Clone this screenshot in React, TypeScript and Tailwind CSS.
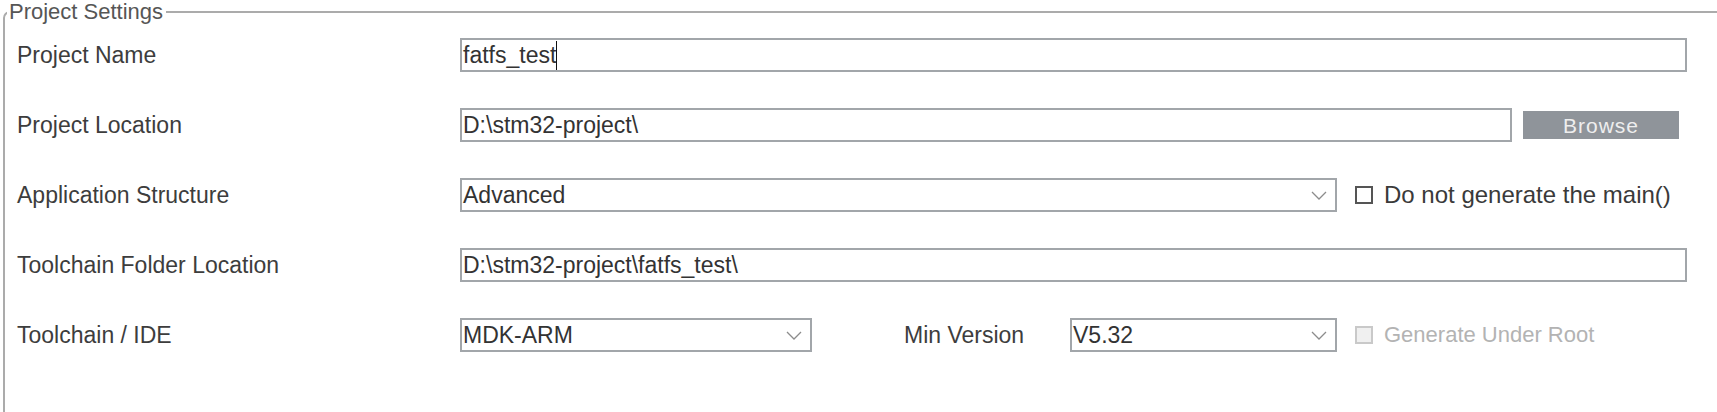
import React from "react";

const Chevron: React.FC = () => (
  <svg width="16" height="9" viewBox="0 0 16 9" fill="none" className="shrink-0">
    <path d="M1 1L8 8L15 1" stroke="#8c8c8c" strokeWidth="1.3" />
  </svg>
);

const TextBox: React.FC<{ value: string; width: string; caret?: boolean }> = ({ value, width, caret }) => (
  <div className={`${width} h-[34px] shrink-0 border-2 border-[#a2a6aa] bg-white flex items-center pl-[1px] pt-[1px] text-[#333333]`}>
    <span className="whitespace-pre">{value}</span>
    {caret && <span className="w-[1px] h-[29px] bg-[#111111]" />}
  </div>
);

const Select: React.FC<{ value: string; width: string }> = ({ value, width }) => (
  <div className={`${width} h-[34px] shrink-0 border-2 border-[#a2a6aa] bg-white flex items-center justify-between pl-[1px] pr-[8px] text-[#333333]`}>
    <span className="pt-[1px]">{value}</span>
    <Chevron />
  </div>
);

const Check: React.FC<{ label: string; disabled?: boolean }> = ({ label, disabled }) => (
  <div className="flex items-center gap-[11px] ml-[18px]">
    <span
      className={
        disabled
          ? "w-[18px] h-[18px] border-2 border-[#c9c9c9] bg-[#f0f0f0]"
          : "w-[18px] h-[18px] border-2 border-[#555555] bg-white"
      }
    />
    <span className={disabled ? "text-[#b3b3b3] text-[22px]" : "text-[#3a3a3a] text-[24px]"}>{label}</span>
  </div>
);

const Label: React.FC<{ children: React.ReactNode }> = ({ children }) => (
  <div className="w-[453px] shrink-0 pl-[10px] pt-[1px] text-[#3d3d3d]">{children}</div>
);

export default function App() {
  return (
    <div className="w-[1717px] h-[412px] overflow-hidden bg-white font-['Liberation_Sans',Arial,sans-serif] text-[23px] leading-none">
      <fieldset className="ml-[3px] w-[1740px] h-[450px] border-2 border-[#ababab] rounded-tl-[7px] pl-[2px]">
        <legend className="pl-[2px] pr-[3px] text-[22px] leading-[23px] text-[#565656]">Project Settings</legend>

        <div className="mt-[15px] flex flex-col gap-[36px]">
          <div className="flex items-center h-[34px]">
            <Label>Project Name</Label>
            <TextBox value="fatfs_test" width="w-[1227px]" caret />
          </div>

          <div className="flex items-center h-[34px]">
            <Label>Project Location</Label>
            <TextBox value="D:\stm32-project\" width="w-[1052px]" />
            <button className="ml-[11px] w-[156px] h-[28px] bg-[#8f949a] text-[#eeeeee] text-[21px] tracking-[1px]">
              Browse
            </button>
          </div>

          <div className="flex items-center h-[34px]">
            <Label>Application Structure</Label>
            <Select value="Advanced" width="w-[877px]" />
            <Check label="Do not generate the main()" />
          </div>

          <div className="flex items-center h-[34px]">
            <Label>Toolchain Folder Location</Label>
            <TextBox value="D:\stm32-project\fatfs_test\" width="w-[1227px]" />
          </div>

          <div className="flex items-center h-[34px]">
            <Label>Toolchain / IDE</Label>
            <Select value="MDK-ARM" width="w-[352px]" />
            <div className="ml-[92px] w-[166px] shrink-0 pt-[1px] text-[#3d3d3d]">Min Version</div>
            <Select value="V5.32" width="w-[267px]" />
            <Check label="Generate Under Root" disabled />
          </div>
        </div>
      </fieldset>
    </div>
  );
}
